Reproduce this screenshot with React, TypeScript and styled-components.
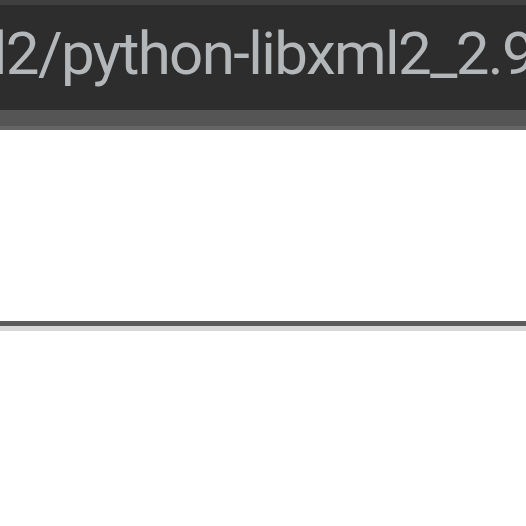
import styled, { createGlobalStyle } from "styled-components";

const Global = createGlobalStyle`
  html, body {
    margin: 0;
    padding: 0;
    background: #ffffff;
  }
  #root {
    width: 526px;
    height: 526px;
    overflow: hidden;
  }
`;

const Window = styled.div`
  display: flex;
  flex-direction: column;
  width: 526px;
  height: 526px;
  background: #ffffff;
`;

const TitleBar = styled.div`
  height: 110px;
  background: #2d2d2d;
  border-top: 5px solid #3f3f3f;
  box-sizing: border-box;
  overflow: hidden;
  display: flex;
  align-items: flex-start;
`;

const PathText = styled.div`
  font-family: Roboto, "Noto Sans", sans-serif;
  font-size: 60px;
  line-height: 1;
  letter-spacing: -1.6px;
  color: #b4b7b9;
  white-space: nowrap;
  padding-top: 19px;
  text-indent: -144px;
`;

const Strip = styled.div`
  height: 16px;
  background: #555555;
  border-bottom: 4px solid #646464;
`;

const Panel = styled.div`
  height: 191px;
  background: #ffffff;
  border-bottom: 5px solid #5b5b5b;
`;

const Shade = styled.div`
  height: 5px;
  background: #d8d8d8;
`;

const Lower = styled.div`
  flex: 1;
  background: #ffffff;
`;

export default function App() {
  return (
    <>
      <Global />
      <Window>
        <TitleBar>
          <PathText>libxml2/python-libxml2_2.9.1</PathText>
        </TitleBar>
        <Strip />
        <Panel />
        <Shade />
        <Lower />
      </Window>
    </>
  );
}
